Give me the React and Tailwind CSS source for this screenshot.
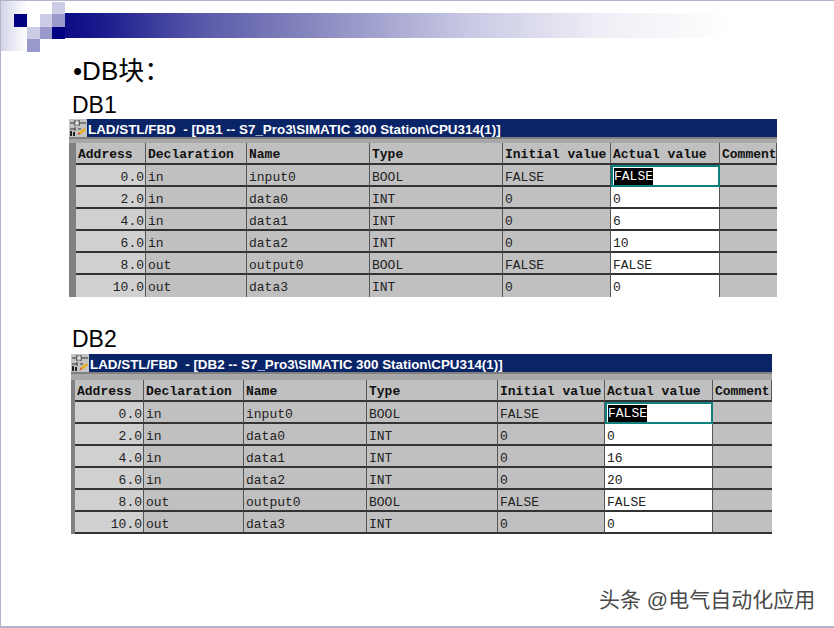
import React from "react";

const rows1 = [
  ["0.0", "in", "input0", "BOOL", "FALSE", "FALSE"],
  ["2.0", "in", "data0", "INT", "0", "0"],
  ["4.0", "in", "data1", "INT", "0", "6"],
  ["6.0", "in", "data2", "INT", "0", "10"],
  ["8.0", "out", "output0", "BOOL", "FALSE", "FALSE"],
  ["10.0", "out", "data3", "INT", "0", "0"],
];

const rows2 = [
  ["0.0", "in", "input0", "BOOL", "FALSE", "FALSE"],
  ["2.0", "in", "data0", "INT", "0", "0"],
  ["4.0", "in", "data1", "INT", "0", "16"],
  ["6.0", "in", "data2", "INT", "0", "20"],
  ["8.0", "out", "output0", "BOOL", "FALSE", "FALSE"],
  ["10.0", "out", "data3", "INT", "0", "0"],
];

const headers = ["Address", "Declaration", "Name", "Type", "Initial value", "Actual value", "Comment"];

function Banner() {
  return (
    <div className="flex h-[51px] w-full">
      <svg width="64" height="51" viewBox="0 0 64 51" className="shrink-0">
        <defs>
          <linearGradient id="fade" x1="0" y1="0" x2="1" y2="0">
            <stop offset="0" stopColor="#d4d4ea" />
            <stop offset="1" stopColor="#ffffff" />
          </linearGradient>
        </defs>
        <rect x="0" y="0" width="26" height="50" fill="url(#fade)" />
        <rect x="13" y="13" width="13" height="13" fill="#000080" />
        <rect x="39" y="13" width="12" height="13" fill="#ccccE6" />
        <rect x="51" y="13" width="13" height="13" fill="#9999cc" />
        <rect x="51" y="1" width="13" height="12" fill="#ccccE6" />
        <rect x="26" y="26" width="13" height="12" fill="#ccccE6" />
        <rect x="39" y="26" width="12" height="12" fill="#9999cc" />
        <rect x="51" y="26" width="13" height="12" fill="#000080" />
        <rect x="26" y="38" width="13" height="13" fill="#9999cc" />
      </svg>
      <div className="mt-[12px] h-[25px] flex-1 bg-[linear-gradient(90deg,#0c0c86_0px,#1a1a8c_35px,#5858aa_135px,#7a7ab8_215px,#c8c8e4_402px,#eeeef6_535px,#ffffff_665px)]" />
    </div>
  );
}

function AppIcon() {
  return (
    <svg width="18" height="18" viewBox="0 0 18 18" className="shrink-0">
      <rect width="18" height="18" fill="#c4c4c4" />
      <path d="M1 4h5M10 4h7M1 10h5M9 10h3M6 1v6M10 1v6M6 8v4" stroke="#333" strokeWidth="1" fill="none" />
      <rect x="6" y="2" width="4" height="4" fill="#e8e8e8" stroke="#555" strokeWidth="0.6" />
      <path d="M1 12h2v5H1zM4 13h2v4H4z" fill="#222" />
      <path d="M9 16l2-4 5-3 1 2-5 4z" fill="#e8b020" />
      <path d="M9 16l2-1-1-2z" fill="#d02818" />
    </svg>
  );
}

function DbTable({ title, rows, cols, bandClass, stripClass, tableClass, closed }) {
  return (
    <div className={tableClass}>
      <div className="flex h-[18px] items-center bg-[#0a2468] font-['Liberation_Sans',sans-serif] text-[13.4px] font-bold whitespace-pre text-white">
        <AppIcon />
        <span className="mt-[4px] ml-px">{title}</span>
      </div>
      <div className={`${bandClass} border-t-2 border-[#808080] bg-[#a8a8a8]`} />
      <div className="flex">
        <div className={`${stripClass} shrink-0 bg-[#808080]`} />
        <div className={`grid flex-1 font-['Liberation_Mono',monospace] text-[13px] leading-[25px] text-[#222] ${cols}`}>
          {headers.map((h) => (
            <div
              key={h}
              className="h-[22px] overflow-hidden border-r border-b-2 border-r-[#555] border-b-[#333] bg-[#c0c0c0] pl-[2px] leading-[23px] font-bold whitespace-nowrap text-[#111] last:border-r-0"
            >
              {h}
            </div>
          ))}
          {rows.map((r, i) => {
            const last = i === rows.length - 1;
            const line = last && !closed ? "" : "border-b-2 border-b-[#333]";
            return (
              <React.Fragment key={i}>
                <div className={`h-[22px] border-r border-r-[#555] bg-[#d0d0d0] pr-[1px] text-right ${line}`}>{r[0]}</div>
                <div className={`h-[22px] border-r border-r-[#555] bg-[#c0c0c0] pl-[2px] ${line}`}>{r[1]}</div>
                <div className={`h-[22px] border-r border-r-[#555] bg-[#c0c0c0] pl-[2px] ${line}`}>{r[2]}</div>
                <div className={`h-[22px] border-r border-r-[#555] bg-[#c0c0c0] pl-[2px] ${line}`}>{r[3]}</div>
                <div className={`h-[22px] border-r border-r-[#555] bg-[#c0c0c0] pl-[2px] ${line}`}>{r[4]}</div>
                {i === 0 ? (
                  <div className="h-[22px] border-2 border-[#0f8080] bg-white pt-px pl-[1px] leading-[17px]">
                    <span className="inline-block bg-black text-white">{r[5]}</span>
                  </div>
                ) : (
                  <div className={`h-[22px] border-r border-r-[#555] bg-white pl-[2px] ${line}`}>{r[5]}</div>
                )}
                <div className={`h-[22px] bg-[#c0c0c0] ${line}`} />
              </React.Fragment>
            );
          })}
        </div>
      </div>
    </div>
  );
}

export default function App() {
  return (
    <div className="flex h-[628px] w-[834px] flex-col overflow-hidden border-t border-b-2 border-l border-[#b4b4c8] bg-white font-['Liberation_Sans','Noto_Sans_CJK_SC',sans-serif] text-black">
      <Banner />

      <div className="mt-[3px] ml-[72px] h-[33px] text-[26px] leading-[33px]">•DB块：</div>
      <div className="mt-[5px] ml-[71px] h-[24px] text-[23px] leading-[24px]">DB1</div>
      <DbTable
        title="LAD/STL/FBD  - [DB1 -- S7_Pro3\SIMATIC 300 Station\CPU314(1)]"
        rows={rows1}
        cols="grid-cols-[70px_101px_123px_133px_108px_109px_57px]"
        bandClass="h-[6px]"
        stripClass="w-[7px]"
        tableClass="mt-[2px] ml-[68px] w-[708px]"
        closed={false}
      />

      <div className="mt-[30px] ml-[71px] h-[24px] text-[23px] leading-[24px]">DB2</div>
      <DbTable
        title="LAD/STL/FBD  - [DB2 -- S7_Pro3\SIMATIC 300 Station\CPU314(1)]"
        rows={rows2}
        cols="grid-cols-[69px_100px_123px_131px_107px_108px_59px]"
        bandClass="h-[8px]"
        stripClass="w-[4px]"
        tableClass="mt-[3px] ml-[70px] w-[701px]"
        closed={true}
      />

      <div className="mt-[53px] ml-[598px] text-[21px] leading-[26px] whitespace-nowrap text-[#4a4a4a]">头条 @电气自动化应用</div>
    </div>
  );
}
